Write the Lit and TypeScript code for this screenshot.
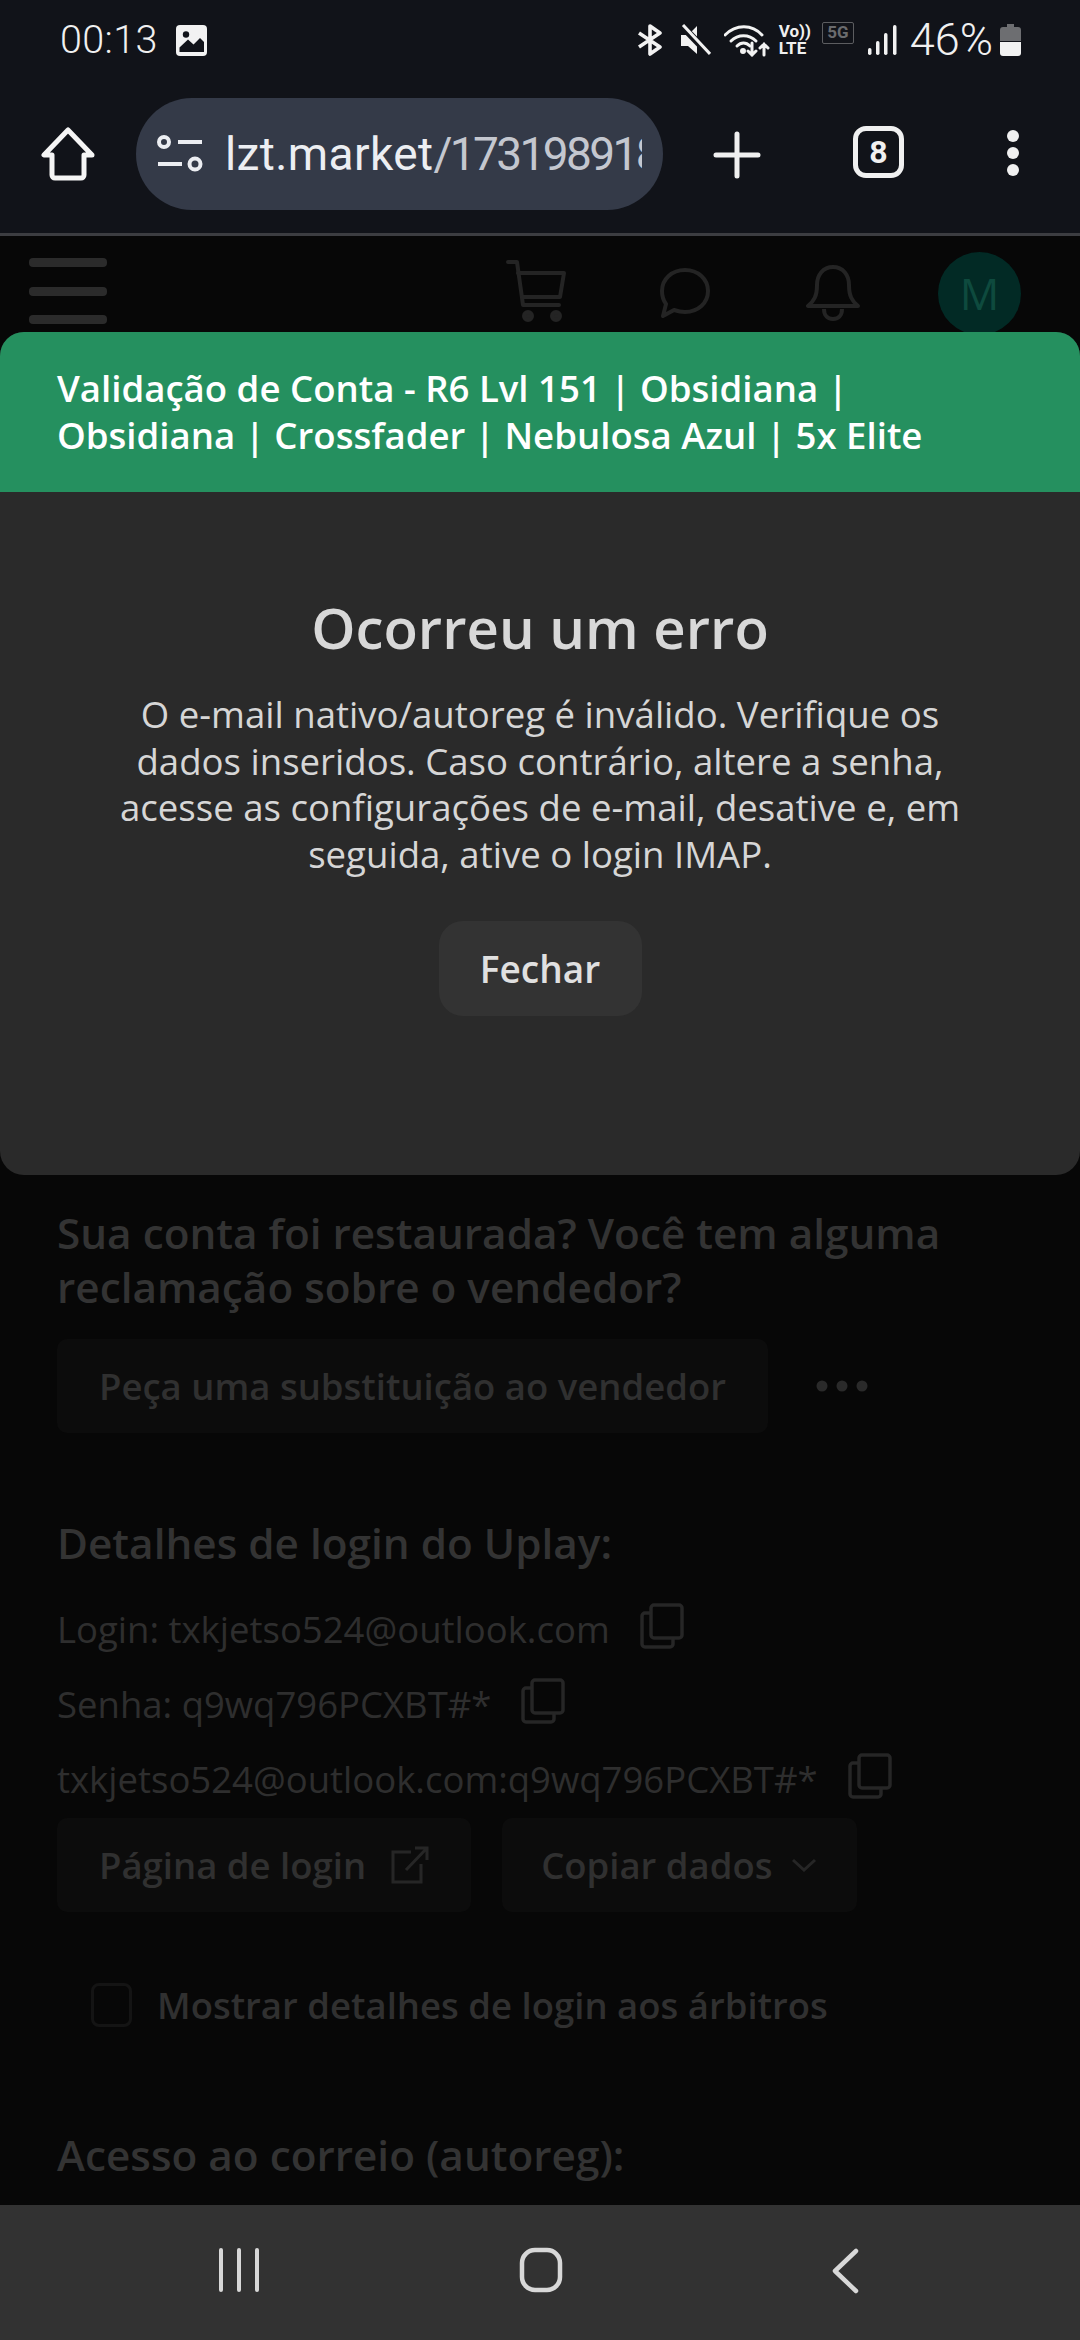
import { LitElement, html, css } from "lit";
import { customElement } from "lit/decorators.js";

const copyIcon = html`<svg class="copy" viewBox="0 0 44 46" fill="none" stroke="#262626" stroke-width="3.5" stroke-linejoin="round">
  <rect x="11" y="2" width="31" height="33" rx="3"/>
  <path d="M11 10H5a3 3 0 0 0-3 3v28a3 3 0 0 0 3 3h25a3 3 0 0 0 3-3v-6"/>
</svg>`;

@customElement("app-root")
export class AppRoot extends LitElement {
  static styles = css`
    :host { display: block; width: 1080px; height: 2340px; overflow: hidden; }
    .root { position: relative; width: 1080px; height: 2340px; display: flex; flex-direction: column; background: #070707; font-family: "Open Sans", sans-serif; }

    .status { height: 80px; flex: none; background: #111319; display: flex; align-items: center; box-sizing: border-box; padding: 0 59px 0 60px; color: #f0f0f0; font-family: Roboto, sans-serif; }
    .time { font-size: 39.5px; font-weight: 300; letter-spacing: 0.4px; line-height: 80px; }
    .pic { width: 31px; height: 31px; margin-left: 18px; }
    .spacer { flex: 1; }
    .bt { width: 28px; height: 32px; }
    .mute { width: 31px; height: 32px; margin-left: 16px; }
    .wifi { width: 46px; height: 33px; margin-left: 13px; }
    .volte { width: 32px; margin-left: 9px; display: flex; flex-direction: column; font-size: 17px; font-weight: 700; line-height: 17px; align-items: flex-start; white-space: nowrap; }
    .five { margin-left: 11px; width: 32px; height: 22px; box-sizing: border-box; border: 1.5px solid #5c5d60; border-radius: 2px; color: #6a6b6e; font-size: 17px; font-weight: 700; line-height: 19px; text-align: center; align-self: flex-start; margin-top: 22px; }
    .signal { width: 29px; height: 30px; margin-left: 14px; }
    .pct { font-size: 45px; font-weight: 300; margin-left: 13px; line-height: 80px; }
    .batt { width: 21px; height: 32px; margin-left: 7px; }

    .toolbar { height: 156px; flex: none; background: #111319; display: flex; align-items: flex-start; box-sizing: border-box; padding-top: 18px; border-bottom: 3px solid #3c3d41; }
    .home { width: 54px; height: 54px; margin: 29px 0 0 41px; }
    .pill { width: 527px; height: 112px; margin-left: 41px; background: #343a48; border-radius: 56px; display: flex; align-items: center; box-sizing: border-box; padding: 0 21px 0 21px; }
    .tune { width: 46px; height: 42px; flex: none; }
    .url { margin-left: 22px; font: 400 46px/60px Roboto, sans-serif; color: #c4c7cf; white-space: nowrap; overflow: hidden; flex: 1; letter-spacing: -2.6px; }
    .url b { font-weight: 400; color: #eceef2; letter-spacing: 0.4px; }
    .plus { width: 48px; height: 48px; margin: 33px 0 0 50px; }
    .tabs { margin: 28px 0 0 92px; width: 51px; height: 52px; box-sizing: border-box; border: 5px solid #f0f0f0; border-radius: 13px; color: #f0f0f0; font: 700 32px/42px Roboto, sans-serif; text-align: center; }
    .dots { width: 14px; height: 48px; margin: 31px 0 0 102px; }

    .pagehead { height: 93px; flex: none; display: flex; align-items: flex-start; position: relative; }
    .burger { margin: 22px 0 0 29px; width: 78px; display: flex; flex-direction: column; gap: 19.5px; }
    .burger i { display: block; height: 9px; border-radius: 4px; background: #2b2b2b; }
    .cart { width: 64px; height: 62px; margin: 24px 0 0 399px; }
    .chat { width: 50px; height: 50px; margin: 32px 0 0 90px; }
    .bell { width: 54px; height: 56px; margin: 29px 0 0 96px; }
    .avatar { width: 83px; height: 83px; border-radius: 50%; background: #022a25; color: #0e4a3e; margin: 16px 0 0 78px; font: 400 44px/83px "Open Sans", sans-serif; text-align: center; flex: none; }

    .main { flex: 1; min-height: 0; overflow: hidden; padding: 877px 0 0 57px; color: #303030; }
    h2 { margin: 0; font-size: 42.3px; line-height: 54px; font-weight: 600; color: #333333; }
    .ask { width: 920px; }
    .row { display: flex; align-items: center; }
    .btn { height: 94px; background: #0c0c0c; border-radius: 10px; display: flex; align-items: center; box-sizing: border-box; padding: 0 42px; font-size: 36.5px; font-weight: 600; color: #303030; white-space: nowrap; }
    .rowa { margin-top: 25px; }
    .more { width: 52px; height: 12px; margin-left: 48px; }
    .details { margin-top: 83px; }
    .line { display: flex; align-items: center; font-size: 36.5px; line-height: 46px; color: #2e2e2e; white-space: nowrap; height: 75px; }
    .lines { margin-top: 21px; }
    .copy { width: 44px; height: 46px; margin-left: 30px; margin-top: -5px; flex: none; }
    .rowb { margin-top: 2px; gap: 31px; }
    .ext { width: 38px; height: 38px; margin-left: 25px; flex: none; }
    .btn.cp { padding: 0 40px 0 39px; }
    .chev { width: 26px; height: 14px; margin-left: 18px; flex: none; }
    .check { margin: 68px 0 0 34px; gap: 25px; }
    .box { width: 41px; height: 44px; box-sizing: border-box; border: 3px solid #141414; border-radius: 8px; flex: none; }
    .check span { font-size: 36.5px; font-weight: 600; color: #303030; }
    .mail { margin-top: 98px; }

    .nav { height: 135px; flex: none; background: #323232; display: flex; align-items: flex-start; }
    .recents { width: 42px; height: 44px; margin: 43px 0 0 218px; }
    .sq { width: 44px; height: 46px; margin: 42px 0 0 259px; }
    .back { width: 27px; height: 46px; margin: 43px 0 0 269px; }

    .modal { position: absolute; left: 0; right: 0; top: 332px; height: 843px; border-radius: 24px; background: #2a2a2a; overflow: hidden; text-align: center; }
    .mhead { background: #25905f; height: 160px; box-sizing: border-box; padding: 33px 80px 0 57px; text-align: left; font-size: 36.6px; line-height: 47px; font-weight: 600; color: #fff; }
    .mtitle { margin: 100px 0 0; font-size: 56.3px; line-height: 70px; font-weight: 600; color: #d8d8d8; }
    .mtext { margin: 29px auto 0; width: 875px; font-size: 36.6px; line-height: 46.7px; color: #d6d6d6; }
    .close { display: inline-block; margin-top: 43px; width: 203px; height: 95px; border-radius: 24px; background: #333333; color: #e0e0e0; font-size: 37px; font-weight: 600; line-height: 95px; }
  `;

  render() {
    return html`<div class="root">
      <div class="status">
        <span class="time">00:13</span>
        <svg class="pic" viewBox="0 0 31 31"><rect width="31" height="31" rx="4" fill="#f2f2f2"/><circle cx="10" cy="9.5" r="3.2" fill="#111319"/><path d="M3.5 27v-4.5L12 14.5l5.5 5L24 13l4 4v10z" fill="#111319"/></svg>
        <span class="spacer"></span>
        <svg class="bt" viewBox="0 0 28 32" fill="none" stroke="#f2f2f2" stroke-width="3.6" stroke-linejoin="round"><path d="M3 9l21 14-10 7V2l10 7L3 23"/></svg>
        <svg class="mute" viewBox="0 0 31 32"><path d="M1 11h7l9-9v28l-9-8H1z" fill="#f2f2f2"/><path d="M2 2l27 28" stroke="#111319" stroke-width="7"/><path d="M3 1l27 29" stroke="#f2f2f2" stroke-width="3"/></svg>
        <svg class="wifi" viewBox="0 0 46 33" fill="none" stroke="#f2f2f2" stroke-width="3" stroke-linecap="round"><path d="M1 11C12 0 28 0 38 11"/><path d="M7 17c7-7 18-7 25 0"/><path d="M13 22c4-4 9-4 13 0"/><circle cx="19" cy="27" r="1.5" fill="#f2f2f2"/><path d="M28 19v12M24 27l4 4 4-4M40 31V20M36 24l4-4 4 4"/></svg>
        <div class="volte"><span>Vo))</span><span>LTE</span></div>
        <div class="five">5G</div>
        <svg class="signal" viewBox="0 0 29 30" fill="#f2f2f2"><rect x="0" y="23" width="3.5" height="7" rx="1.7"/><rect x="8" y="16" width="3.5" height="14" rx="1.7"/><rect x="16" y="8" width="3.5" height="22" rx="1.7"/><rect x="25" y="0" width="3.5" height="30" rx="1.7"/></svg>
        <span class="pct">46%</span>
        <svg class="batt" viewBox="0 0 21 32"><path d="M7 0h7v3h4a3 3 0 0 1 3 3v11H0V6a3 3 0 0 1 3-3h4z" fill="#6d6e71"/><path d="M0 18h21v11a3 3 0 0 1-3 3H3a3 3 0 0 1-3-3z" fill="#f2f2f2"/></svg>
      </div>

      <div class="toolbar">
        <svg class="home" viewBox="0 0 54 54" fill="none" stroke="#f5f5f5" stroke-width="5" stroke-linejoin="round"><path d="M27 3L3 28h8v20a3 3 0 0 0 3 3h26a3 3 0 0 0 3-3V28h8z"/></svg>
        <div class="pill">
          <svg class="tune" viewBox="0 0 46 42" fill="none" stroke="#eceef2" stroke-width="4"><circle cx="7" cy="9" r="5"/><path d="M21 9h24M1 31h24"/><circle cx="38" cy="31" r="5.5"/></svg>
          <span class="url"><b>lzt.market</b>/173198918</span>
        </div>
        <svg class="plus" viewBox="0 0 48 48" stroke="#f0f0f0" stroke-width="5" stroke-linecap="round"><path d="M24 3v42M3 24h42"/></svg>
        <div class="tabs">8</div>
        <svg class="dots" viewBox="0 0 14 48" fill="#f0f0f0"><circle cx="7" cy="7" r="6"/><circle cx="7" cy="24" r="6"/><circle cx="7" cy="41" r="6"/></svg>
      </div>

      <div class="pagehead">
        <div class="burger"><i></i><i></i><i></i></div>
        <svg class="cart" viewBox="0 0 64 62" fill="none" stroke="#242424" stroke-width="4" stroke-linejoin="round" stroke-linecap="round"><path d="M2 2h9l6 43h36"/><path d="M12 13h46l-4 24H16"/><circle cx="22" cy="56" r="4" fill="#242424"/><circle cx="50" cy="56" r="4" fill="#242424"/></svg>
        <svg class="chat" viewBox="0 0 50 50" fill="none" stroke="#242424" stroke-width="4" stroke-linejoin="round"><path d="M25 2c13 0 23 9 23 21S38 44 25 44c-4 0-8-1-11-2l-11 6 3-12C3 32 2 28 2 23 2 11 12 2 25 2z"/></svg>
        <svg class="bell" viewBox="0 0 54 56" fill="none" stroke="#242424" stroke-width="4" stroke-linejoin="round"><path d="M27 2c-10 0-16 8-16 18 0 11-3 16-9 21h50c-6-5-9-10-9-21 0-10-6-18-16-18z"/><path d="M18 44c0 7 4 10 9 10s9-3 9-10"/></svg>
        <div class="avatar">M</div>
      </div>

      <div class="main">
        <h2 class="ask">Sua conta foi restaurada? Você tem alguma reclamação sobre o vendedor?</h2>
        <div class="row rowa">
          <div class="btn">Peça uma substituição ao vendedor</div>
          <svg class="more" viewBox="0 0 52 12" fill="#2a2a2a"><circle cx="6" cy="6" r="5.5"/><circle cx="26" cy="6" r="5.5"/><circle cx="46" cy="6" r="5.5"/></svg>
        </div>
        <h2 class="details">Detalhes de login do Uplay:</h2>
        <div class="lines">
          <div class="line">Login: txkjetso524@outlook.com ${copyIcon}</div>
          <div class="line">Senha: q9wq796PCXBT#* ${copyIcon}</div>
          <div class="line">txkjetso524@outlook.com:q9wq796PCXBT#* ${copyIcon}</div>
        </div>
        <div class="row rowb">
          <div class="btn">Página de login
            <svg class="ext" viewBox="0 0 38 38" fill="none" stroke="#262626" stroke-width="3"><path d="M20 6H2v30h28V18"/><path d="M15 24L36 2M24 2h12v12"/></svg>
          </div>
          <div class="btn cp">Copiar dados
            <svg class="chev" viewBox="0 0 26 14" fill="none" stroke="#262626" stroke-width="3"><path d="M2 2l11 10L24 2"/></svg>
          </div>
        </div>
        <div class="row check"><div class="box"></div><span>Mostrar detalhes de login aos árbitros</span></div>
        <h2 class="mail">Acesso ao correio (autoreg):</h2>
      </div>

      <div class="nav">
        <svg class="recents" viewBox="0 0 42 44" stroke="#d8d8d8" stroke-width="4" stroke-linecap="round"><path d="M3 2v40M21 2v40M39 2v40"/></svg>
        <svg class="sq" viewBox="0 0 44 46" fill="none" stroke="#d8d8d8" stroke-width="4.5"><rect x="3" y="3" width="38" height="40" rx="13"/></svg>
        <svg class="back" viewBox="0 0 27 46" fill="none" stroke="#d8d8d8" stroke-width="4.5" stroke-linecap="round" stroke-linejoin="round"><path d="M24 3L3 23l21 20"/></svg>
      </div>

      <div class="modal">
        <div class="mhead">Validação de Conta - R6 Lvl 151 | Obsidiana | Obsidiana | Crossfader | Nebulosa Azul | 5x Elite</div>
        <h1 class="mtitle">Ocorreu um erro</h1>
        <p class="mtext">O e-mail nativo/autoreg é inválido. Verifique os dados inseridos. Caso contrário, altere a senha, acesse as configurações de e-mail, desative e, em seguida, ative o login IMAP.</p>
        <div class="close">Fechar</div>
      </div>
    </div>`;
  }
}
